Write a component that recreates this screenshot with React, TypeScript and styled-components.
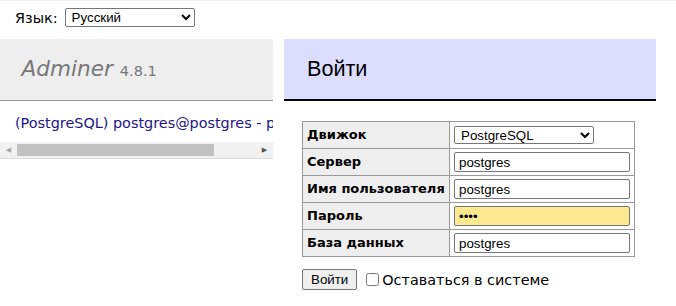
import React from 'react'
import styled, { createGlobalStyle } from 'styled-components'

const GlobalStyle = createGlobalStyle`
   body {
      margin: 0;
      background: #fff;
      color: #000;
      font: 14.4px/1.25 'DejaVu Sans', Verdana, sans-serif;
   }
`

const fields = [
   { label: 'Сервер', value: 'postgres' },
   { label: 'Имя пользователя', value: 'postgres' },
   { label: 'Пароль', value: '••••', password: true },
   { label: 'База данных', value: 'postgres' },
]

const App = () => {
   return (
      <Page>
         <GlobalStyle />
         <LangBar>
            <span>Язык:</span>
            <LangSelect defaultValue="ru">
               <option value="ru">Русский</option>
               <option value="en">English</option>
            </LangSelect>
         </LangBar>
         <Main>
            <Menu>
               <MenuTitle>
                  <Brand>Adminer</Brand> <Version>4.8.1</Version>
               </MenuTitle>
               <Links>
                  <a href="#">(PostgreSQL) postgres@postgres - postgres</a>
               </Links>
               <ScrollBar>
                  <Arrow disabled>◀</Arrow>
                  <Track>
                     <Thumb />
                  </Track>
                  <Arrow>▶</Arrow>
               </ScrollBar>
            </Menu>
            <Content>
               <Title>Войти</Title>
               <form onSubmit={(e) => e.preventDefault()}>
                  <LoginTable>
                     <tbody>
                        <tr>
                           <th>Движок</th>
                           <td>
                              <DriverSelect defaultValue="pgsql">
                                 <option value="pgsql">PostgreSQL</option>
                                 <option value="server">MySQL</option>
                              </DriverSelect>
                           </td>
                        </tr>
                        {fields.map((f, i) => (
                           <tr key={i}>
                              <th>{f.label}</th>
                              <td>
                                 <Field readOnly value={f.value} filled={!!f.password} />
                              </td>
                           </tr>
                        ))}
                     </tbody>
                  </LoginTable>
                  <Actions>
                     <Submit type="submit">Войти</Submit>{' '}
                     <label>
                        <Check type="checkbox" />
                        Оставаться в системе
                     </label>
                  </Actions>
               </form>
            </Content>
         </Main>
      </Page>
   )
}

const Page = styled('div')`
   width: 676px;
   min-height: 306px;
   border-top: 1px solid #eee;
`
const LangBar = styled('div')`
   display: flex;
   align-items: center;
   gap: 7px;
   height: 19px;
   padding: 7px 0 12px 15px;
`
const LangSelect = styled('select')`
   width: 130px;
   height: 19px;
   padding: 0 0 0 2px;
   font: 13.33px 'Liberation Sans', Arial, sans-serif;
   border: 1px solid #767676;
   border-radius: 2px;
   background: #fff;
   color: #000;
`
const Main = styled('div')`
   display: flex;
   gap: 11px;
`
const Menu = styled('div')`
   width: 273px;
   flex: none;
`
const MenuTitle = styled('h1')`
   margin: 0;
   padding: 17px 21.6px;
   height: 27px;
   font-size: 21.6px;
   font-weight: normal;
   background: #eee;
   border-bottom: 1px solid #999;
   color: #777;
   white-space: nowrap;
`
const Brand = styled('span')`
   font-style: italic;
`
const Version = styled('span')`
   font-size: 14.5px;
`
const Links = styled('p')`
   margin: 0;
   padding: 13px 0 10px 15px;
   white-space: nowrap;
   overflow: hidden;
   a {
      color: #1c1488;
      text-decoration: none;
   }
`
const ScrollBar = styled('div')`
   display: flex;
   height: 16px;
   background: #f1f1f1;
   border-bottom: 1px solid #dcdcdc;
`
const Arrow = styled('span')<{ disabled?: boolean }>`
   width: 17px;
   flex: none;
   display: flex;
   align-items: center;
   justify-content: center;
   font: 7px 'DejaVu Sans', sans-serif;
   color: ${(p) => (p.disabled ? '#a3a3a3' : '#505050')};
`
const Track = styled('div')`
   flex: 1;
   padding: 2px 0;
`
const Thumb = styled('div')`
   width: 197px;
   height: 100%;
   background: #c1c1c1;
`
const Content = styled('div')`
   flex: 1;
   padding-right: 20px;
`
const Title = styled('h2')`
   margin: 0 0 20px;
   padding: 17px 21.6px 17px 23px;
   height: 26px;
   font: 21.6px/26px 'Liberation Sans', Arial, sans-serif;
   background: #ddf;
   border-bottom: 2px solid #000;
   color: #000;
`
const LoginTable = styled('table')`
   margin-left: 18px;
   border-collapse: collapse;
   font-size: 13px;
   th,
   td {
      height: 27px;
      box-sizing: border-box;
      border: 1px solid #999;
      padding: 0 4px;
      vertical-align: middle;
   }
   th {
      width: 147px;
      text-align: left;
      background: #eee;
      font-weight: bold;
      white-space: nowrap;
   }
   td {
      width: 184px;
   }
`
const DriverSelect = styled('select')`
   display: block;
   width: 140px;
   height: 18px;
   padding: 0 0 0 2px;
   font: 13.33px 'Liberation Sans', Arial, sans-serif;
   border: 1px solid #767676;
   border-radius: 2px;
   background: #fff;
   color: #000;
`
const Field = styled('input')<{ filled?: boolean }>`
   display: block;
   box-sizing: border-box;
   width: 176px;
   height: 20px;
   padding: 1px 4px;
   font: 13.33px 'Liberation Sans', Arial, sans-serif;
   border: 1px solid #767676;
   border-radius: 2px;
   background: ${(p) => (p.filled ? '#fee890' : '#fff')};
   color: #000;
   outline: none;
`
const Actions = styled('p')`
   margin: 12px 0 0 18px;
   display: flex;
   align-items: center;
   label {
      display: flex;
      align-items: center;
   }
`
const Submit = styled('button')`
   height: 21px;
   padding: 1px 8px;
   font: 13.33px 'Liberation Sans', Arial, sans-serif;
   color: #000;
   background: #efefef;
   border: 1px solid #767676;
   border-radius: 2px;
   margin-right: 5px;
`
const Check = styled('input')`
   width: 13px;
   height: 13px;
   margin: 0 3px 0 4px;
`

export default App
